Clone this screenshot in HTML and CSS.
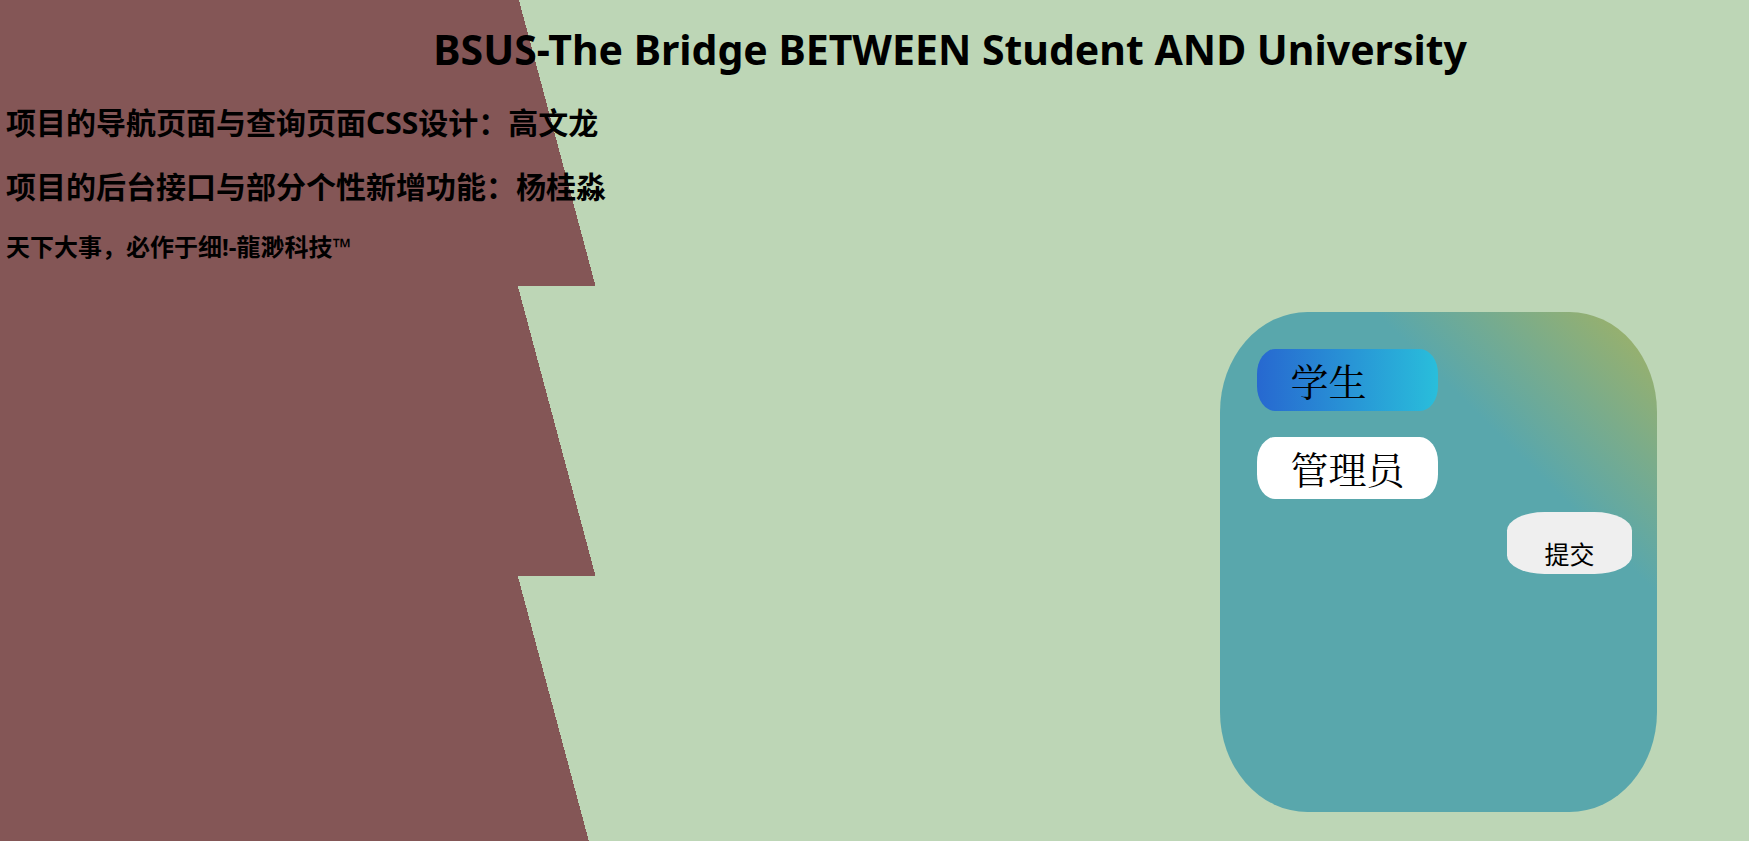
FILE: index.html
```html
<!DOCTYPE html>
<html lang="zh-CN">
<head>
<meta charset="utf-8">
<title>BSUS</title>
<link rel="stylesheet" href="styles.css">
</head>
<body class="page">
<header class="intro">
<h1 class="title">BSUS-The Bridge BETWEEN Student AND University</h1>
<h2 class="credit">项目的导航页面与查询页面CSS设计：高文龙</h2>
<h2 class="credit">项目的后台接口与部分个性新增功能：杨桂淼</h2>
<h3 class="motto">天下大事，必作于细!-龍渺科技™</h3>
</header>
<main class="content">
<form class="card">
<button class="role role-active" type="button">学生</button>
<button class="role" type="button">管理员</button>
<button class="submit" type="submit">提交</button>
</form>
</main>
</body>
</html>
```
FILE: styles.css
```css
* {
  box-sizing: border-box;
}

.page {
  margin: 0;
  color: #000;
  font-family: "Noto Sans", "Noto Sans CJK SC", sans-serif;
  background: linear-gradient(75deg, #845656 32.6%, #bdd6b6 32.6%) 0 -4px / 100% 290px repeat-y;
}

.intro {
  padding: 20px 6px 0;
}

.title {
  margin: 0 0 25px 24.6%;
  font-size: 41px;
  line-height: 58px;
  white-space: nowrap;
}

.credit {
  margin: 0 0 24px;
  font-size: 30px;
  line-height: 40px;
}

.motto {
  margin: 0;
  font-size: 24px;
  line-height: 32px;
}

.content {
  display: flex;
  justify-content: flex-end;
  padding: 49px 92px 29px 0;
}

.card {
  display: flex;
  flex-direction: column;
  align-items: flex-start;
  width: 26.4%;
  min-height: 500px;
  padding: 37px 25px 37px 37px;
  border-radius: 20%;
  background: linear-gradient(45deg, #59a7ac 70%, #a4b261);
}

.role {
  width: 181px;
  height: 62px;
  margin-bottom: 26px;
  padding: 0 0 0 34px;
  border: 0;
  border-radius: 10% / 40%;
  background: #fff;
  color: #000;
  font-family: "Noto Serif CJK SC", "Noto Sans CJK SC", serif;
  font-size: 38px;
  line-height: 62px;
  text-align: left;
}

.role-active {
  background: linear-gradient(90deg, #2768d0, #29bedb);
}

.submit {
  align-self: flex-end;
  width: 125px;
  height: 62px;
  margin-top: -13px;
  padding: 20px 0 0;
  border: 0;
  border-radius: 30%;
  background: #efefef;
  color: #000;
  font-family: "Noto Sans CJK SC", sans-serif;
  font-size: 25px;
  line-height: 40px;
}
```
